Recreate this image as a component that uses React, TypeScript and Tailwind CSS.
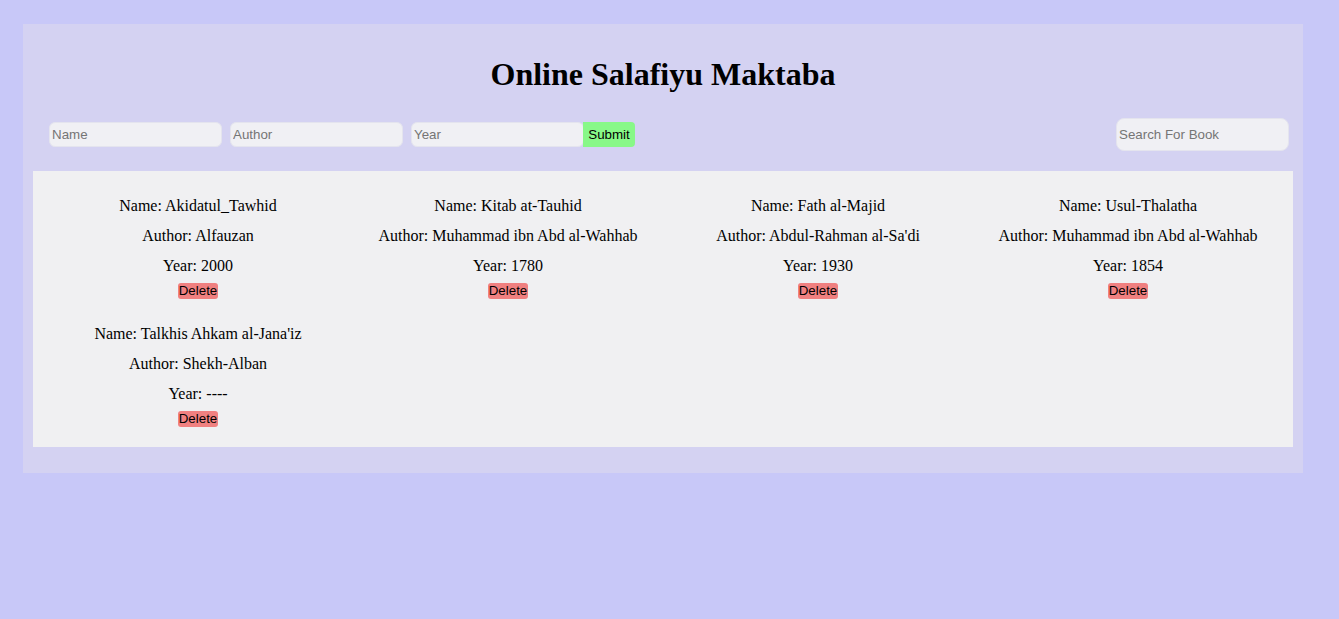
import { useState } from 'react'

interface Book {
  name: string
  author: string
  year: string
}

const initialBooks: Book[] = [
  { name: 'Akidatul_Tawhid', author: 'Alfauzan', year: '2000' },
  { name: 'Kitab at-Tauhid', author: 'Muhammad ibn Abd al-Wahhab', year: '1780' },
  { name: 'Fath al-Majid', author: "Abdul-Rahman al-Sa'di", year: '1930' },
  { name: 'Usul-Thalatha', author: 'Muhammad ibn Abd al-Wahhab', year: '1854' },
  { name: "Talkhis Ahkam al-Jana'iz", author: 'Shekh-Alban', year: '----' },
]

const inputClass =
  "w-[173px] h-[25px] px-[2px] rounded-[6px] border border-[#e4e4ee] bg-[#f0f0f4] text-[13.33px] text-black placeholder:text-[#757575] outline-none font-['Liberation_Sans',Arial,sans-serif]"

const App = () => {
  const [books, setBooks] = useState<Book[]>(initialBooks)
  const [form, setForm] = useState({ name: '', author: '', year: '' })
  const [search, setSearch] = useState('')

  const handleSubmit = (e: React.FormEvent) => {
    e.preventDefault()
    if (!form.name) return
    setBooks([...books, { ...form, year: form.year || '----' }])
    setForm({ name: '', author: '', year: '' })
  }

  const shown = books.filter((b) => b.name.toLowerCase().includes(search.toLowerCase()))

  return (
    <div className="min-h-screen bg-[#c8c8f8] pt-[24px] pl-[23px] pr-[36px] font-['Liberation_Serif','Times_New_Roman',serif]">
      <div className="bg-[#d4d2f2] px-[10px] pt-[32px] pb-[26px]">
        <h1 className="h-[37px] leading-[37px] text-center text-[32px] font-bold text-black">
          Online Salafiyu Maktaba
        </h1>

        <div className="mt-[25px] h-[33px] flex items-center justify-between pl-4 pr-1">
          <form onSubmit={handleSubmit} className="flex items-center gap-2">
            <input
              className={inputClass}
              placeholder="Name"
              value={form.name}
              onChange={(e) => setForm({ ...form, name: e.target.value })}
            />
            <input
              className={inputClass}
              placeholder="Author"
              value={form.author}
              onChange={(e) => setForm({ ...form, author: e.target.value })}
            />
            <div className="flex items-center">
              <input
                className={inputClass}
                placeholder="Year"
                value={form.year}
                onChange={(e) => setForm({ ...form, year: e.target.value })}
              />
              <button
                type="submit"
                className="-ml-[1px] h-[25px] w-[52px] rounded-r-[4px] bg-[#88f888] text-[13.33px] text-black font-['Liberation_Sans',Arial,sans-serif]"
              >
                Submit
              </button>
            </div>
          </form>
          <input
            className="w-[173px] h-[33px] px-[2px] rounded-[8px] border border-[#e4e4ee] bg-[#f0f0f4] text-[13.33px] text-black placeholder:text-[#757575] outline-none font-['Liberation_Sans',Arial,sans-serif]"
            placeholder="Search For Book"
            value={search}
            onChange={(e) => setSearch(e.target.value)}
          />
        </div>

        <div className="mt-[20px] bg-[#f0f0f2] px-[10px] pb-[20px] grid grid-cols-4">
          {shown.map((b, i) => (
            <div key={i} className="pt-[26px] flex flex-col items-center text-[16px] text-black">
              <p className="h-[18px] leading-[18px]">Name: {b.name}</p>
              <p className="mt-[12px] h-[18px] leading-[18px]">Author: {b.author}</p>
              <p className="mt-[12px] h-[18px] leading-[18px]">Year: {b.year}</p>
              <button
                onClick={() => setBooks(books.filter((x) => x !== b))}
                className="mt-[8px] h-[16px] px-[1px] leading-[16px] rounded-[3px] bg-[#f08080] text-[13.33px] text-black font-['Liberation_Sans',Arial,sans-serif]"
              >
                Delete
              </button>
            </div>
          ))}
        </div>
      </div>
    </div>
  )
}

export default App
